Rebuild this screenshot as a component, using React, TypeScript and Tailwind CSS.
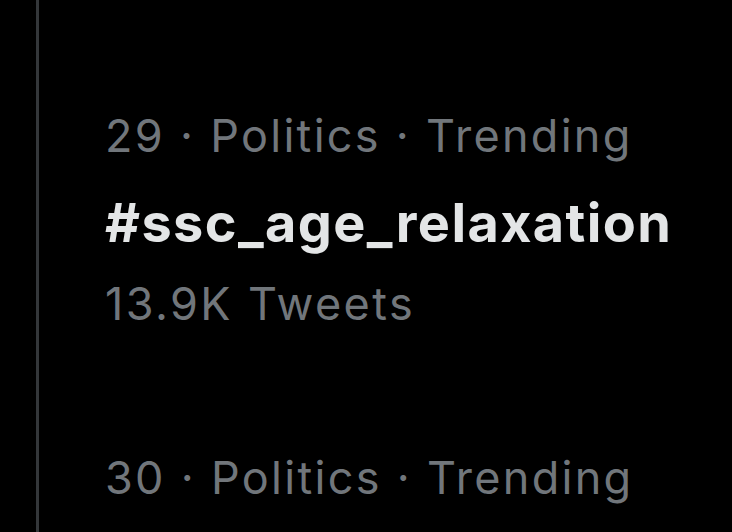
const trends = [
  { rank: 29, category: 'Politics', tag: '#ssc_age_relaxation', count: '13.9K Tweets' },
  { rank: 30, category: 'Politics', tag: '', count: '' },
];

export default function App() {
  return (
    <div className="h-[532px] w-[732px] overflow-hidden bg-black" style={{ fontFamily: 'Inter, "Noto Sans", sans-serif' }}>
      <div className="ml-[36px] h-full border-l-[3px] border-[#34373a] pl-[66px] pt-[108px]">
        {trends.map((t) => (
          <div key={t.rank} className="mb-[118px]">
            <div className="text-[45px] leading-[56px] tracking-[2.3px] text-[#71767b] whitespace-nowrap">
              {t.rank} · {t.category} · Trending
            </div>
            {t.tag && (
              <div className="mt-[24px] text-[54px] leading-[70px] tracking-[1.4px] font-bold text-[#e3e5e6] whitespace-nowrap">
                {t.tag}
              </div>
            )}
            {t.count && (
              <div className="mt-[18px] text-[45px] leading-[56px] tracking-[2.4px] text-[#71767b] whitespace-nowrap">
                {t.count}
              </div>
            )}
          </div>
        ))}
      </div>
    </div>
  );
}
